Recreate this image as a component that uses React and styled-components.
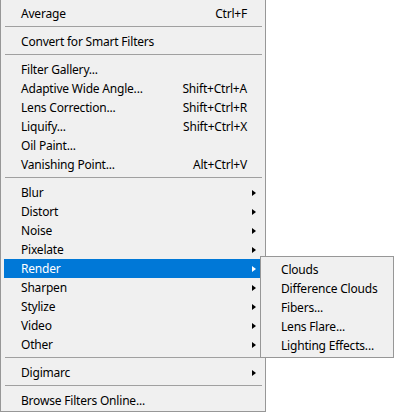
import React from 'react';
import styled, { createGlobalStyle } from 'styled-components';

const GlobalStyle = createGlobalStyle`
    html, body {
        margin: 0;
        padding: 0;
        background: #ffffff;
    }
    body {
        font-family: "Noto Sans", "Open Sans", "Noto Sans CJK KR", sans-serif;
        font-size: 12px;
        letter-spacing: -0.2px;
        color: #000000;
    }
`;

const groups = [
    [{ label: 'Average', shortcut: 'Ctrl+F' }],
    [{ label: 'Convert for Smart Filters' }],
    [
        { label: 'Filter Gallery...' },
        { label: 'Adaptive Wide Angle...', shortcut: 'Shift+Ctrl+A' },
        { label: 'Lens Correction...', shortcut: 'Shift+Ctrl+R' },
        { label: 'Liquify...', shortcut: 'Shift+Ctrl+X' },
        { label: 'Oil Paint...' },
        { label: 'Vanishing Point...', shortcut: 'Alt+Ctrl+V' },
    ],
    [
        { label: 'Blur', sub: true },
        { label: 'Distort', sub: true },
        { label: 'Noise', sub: true },
        { label: 'Pixelate', sub: true },
        { label: 'Render', sub: true, open: true },
        { label: 'Sharpen', sub: true },
        { label: 'Stylize', sub: true },
        { label: 'Video', sub: true },
        { label: 'Other', sub: true },
    ],
    [{ label: 'Digimarc', sub: true }],
    [{ label: 'Browse Filters Online...' }],
];

const renderItems = [
    'Clouds',
    'Difference Clouds',
    'Fibers...',
    'Lens Flare...',
    'Lighting Effects...',
];

const App = () => {
    return (
        <>
            <GlobalStyle />
            <Menu>
                {groups.map((group, gi) => (
                    <React.Fragment key={gi}>
                        {gi > 0 && <Separator />}
                        {group.map(item => (
                            <Item key={item.label} $active={item.open}>
                                <Label>{item.label}</Label>
                                {item.shortcut && <Shortcut>{item.shortcut}</Shortcut>}
                                <ArrowCell>
                                    {item.sub && <Arrow $active={item.open} />}
                                </ArrowCell>
                                {item.open && (
                                    <SubMenu>
                                        {renderItems.map(name => (
                                            <SubItem key={name}>{name}</SubItem>
                                        ))}
                                    </SubMenu>
                                )}
                            </Item>
                        ))}
                    </React.Fragment>
                ))}
            </Menu>
        </>
    );
};

export default App;

const Menu = styled.div`
    width: 256px;
    padding: 4px 5px 1px 3px;
    background: #f0f0f0;
    border: 1px solid #979797;
    border-top: none;
    display: flex;
    flex-direction: column;
`;

const Separator = styled.div`
    height: 1px;
    margin: 3px -2px 5px 1px;
    background: #a0a0a0;
`;

const Item = styled.div`
    position: relative;
    display: flex;
    align-items: center;
    height: 19px;
    padding-left: 17px;
    background: ${p => (p.$active ? '#0078d7' : 'transparent')};
    color: ${p => (p.$active ? '#ffffff' : '#000000')};
    white-space: nowrap;
`;

const Label = styled.span`
    flex: 1;
`;

const Shortcut = styled.span``;

const ArrowCell = styled.span`
    width: 13px;
    display: flex;
    align-items: center;
    padding-left: 5px;
    box-sizing: border-box;
`;

const Arrow = styled.span`
    width: 0;
    height: 0;
    border-top: 3.5px solid transparent;
    border-bottom: 3.5px solid transparent;
    border-left: 4px solid ${p => (p.$active ? '#ffffff' : '#000000')};
`;

const SubMenu = styled.div`
    position: absolute;
    left: 100%;
    top: -3px;
    width: 112px;
    padding: 3px 0 2px 20px;
    background: #f0f0f0;
    border: 1px solid #979797;
    display: flex;
    flex-direction: column;
    z-index: 2;
`;

const SubItem = styled.div`
    height: 19px;
    display: flex;
    align-items: center;
    color: #000000;
`;
